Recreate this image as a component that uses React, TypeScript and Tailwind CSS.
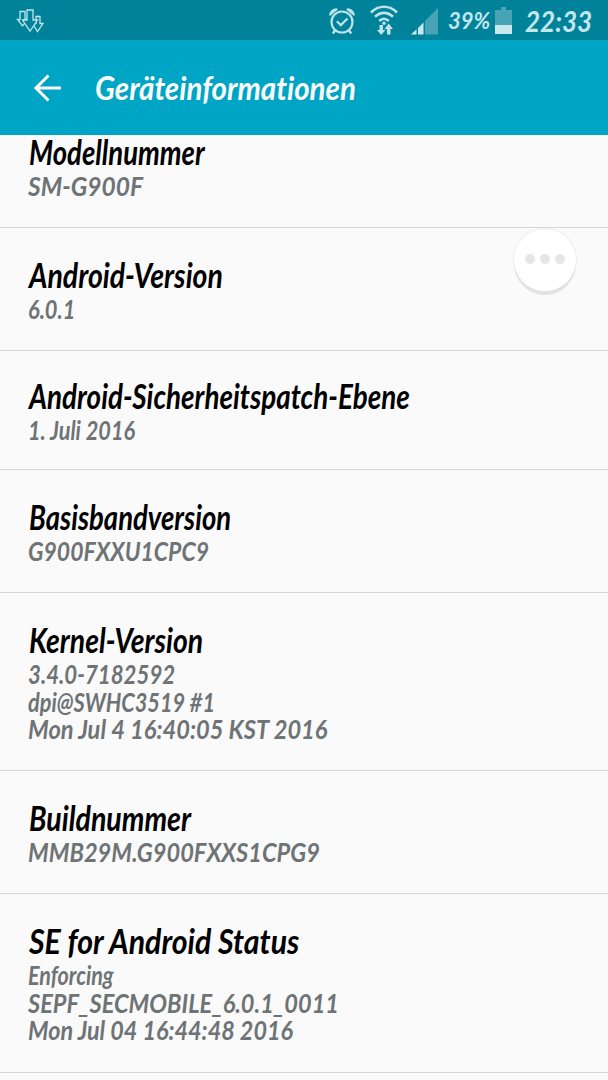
import { useLayoutEffect, useRef, useState } from 'react'
import clsx from 'clsx'

interface Line {
  text: string
  width: number
}

interface Entry {
  title: Line
  values: Line[]
  /** Row height and top padding. */
  box: string
}

const entries: Entry[] = [
  {
    title: { text: 'Modellnummer', width: 176 },
    values: [{ text: 'SM-G900F', width: 115 }],
    box: 'h-[93px] pt-0',
  },
  {
    title: { text: 'Android-Version', width: 194 },
    values: [{ text: '6.0.1', width: 47 }],
    box: 'h-[123px] pt-[30px]',
  },
  {
    title: { text: 'Android-Sicherheitspatch-Ebene', width: 381 },
    values: [{ text: '1. Juli 2016', width: 107 }],
    box: 'h-[119px] pt-[28px]',
  },
  {
    title: { text: 'Basisbandversion', width: 202 },
    values: [{ text: 'G900FXXU1CPC9', width: 181 }],
    box: 'h-[123px] pt-[30px]',
  },
  {
    title: { text: 'Kernel-Version', width: 174 },
    values: [
      { text: '3.4.0-7182592', width: 147 },
      { text: 'dpi@SWHC3519 #1', width: 187 },
      { text: 'Mon Jul 4 16:40:05 KST 2016', width: 299 },
    ],
    box: 'h-[178px] pt-[30px]',
  },
  {
    title: { text: 'Buildnummer', width: 162 },
    values: [{ text: 'MMB29M.G900FXXS1CPG9', width: 292 }],
    box: 'h-[123px] pt-[30px]',
  },
  {
    title: { text: 'SE for Android Status', width: 270 },
    values: [
      { text: 'Enforcing', width: 86 },
      { text: 'SEPF_SECMOBILE_6.0.1_0011', width: 311 },
      { text: 'Mon Jul 04 16:44:48 2016', width: 265 },
    ],
    box: 'h-[179px] pt-[30px]',
  },
]

/** One line of text, condensed or stretched to the given width. */
function FitText({ text, width, className }: Line & { className?: string }) {
  const ref = useRef<HTMLSpanElement>(null)
  const [scale, setScale] = useState(1)

  useLayoutEffect(() => {
    const natural = ref.current?.offsetWidth
    if (natural) setScale(width / natural)
  }, [text, width])

  return (
    <span className={clsx('block', className)} style={{ width }}>
      <span
        ref={ref}
        className="inline-block origin-left align-top whitespace-nowrap"
        style={{ transform: `scaleX(${scale})` }}
      >
        {text}
      </span>
    </span>
  )
}

function DownloadsIcon() {
  return (
    <svg width="28" height="24" viewBox="0 0 28 24" fill="#00829b" stroke="#bfe3ea" strokeWidth="1.3" className="shrink-0">
      <path d="M4 2.500h5v8h3L6.500 17 1.500 10.500H4z" />
      <path d="M20 7.500h4v7h3L21.500 22.500 16.500 14.500H20z" />
      <path d="M11 1h6v10h4.500L14 22 6.500 11H11z" />
    </svg>
  )
}

function AlarmIcon() {
  return (
    <svg width="26" height="28" viewBox="0 0 26 28" fill="none" stroke="#bfe3ea" className="shrink-0">
      <circle cx="13" cy="14" r="10.500" strokeWidth="2.200" />
      <path d="M7.800 13.300l4 3.800 6.700-6.600" strokeWidth="2.200" />
      <path d="M0 7.500C.3 3.500 3.500.3 7.800.3l.9 1.500L1.500 7.500zM26 7.500C25.700 3.500 22.500.3 18.200.3l-.9 1.500 7.200 5.700z" fill="#bfe3ea" stroke="none" />
      <path d="M6 22.500l-2.200 3M20 22.500l2.200 3" strokeWidth="2.400" />
    </svg>
  )
}

function WifiIcon() {
  return (
    <svg width="28" height="31" viewBox="0 0 28 31" fill="none" stroke="#bfe3ea" className="shrink-0">
      <path d="M1 7.500C8.500-.2 19.500-.2 27 7.500M5 11.800c5.500-5.300 12.500-5.300 18 0M9.200 16c3-2.800 6.600-2.800 9.600 0" strokeWidth="2.600" />
      <circle cx="14" cy="18.300" r="1.700" fill="#bfe3ea" stroke="none" />
      <path d="M9.500 20h3.500v5h2.500L11.200 30 7 25h2.500zM17 29.500V24h-2.500l4.200-5.500L23 24h-2.500v5.500z" fill="#bfe3ea" stroke="none" />
    </svg>
  )
}

function SignalIcon() {
  return (
    <svg width="27" height="27" viewBox="0 0 27 27" className="shrink-0">
      <path d="M0 26.500l5.500-5.200v5.200zM7 20l5.500-5.500v12H7z" fill="#c9e8ee" />
      <path d="M14 13L27 0v26.500H14z" fill="#47a3b5" />
    </svg>
  )
}

function BatteryIcon() {
  return (
    <svg width="17" height="27" viewBox="0 0 17 27" className="shrink-0">
      <path d="M6 0h5v3h6v15H0V3h6z" fill="#47a3b5" />
      <path d="M0 18h17v9H0z" fill="#c9e8ee" />
    </svg>
  )
}

function StatusBar() {
  return (
    <div className="flex h-10 items-start bg-[#00829b] pl-4 text-[#c5e6ec]">
      <div className="pt-[9px]">
        <DownloadsIcon />
      </div>
      <div className="ml-[285px] pt-2">
        <AlarmIcon />
      </div>
      <div className="ml-[15px] pt-[5px]">
        <WifiIcon />
      </div>
      <div className="ml-[13px] pt-2">
        <SignalIcon />
      </div>
      <FitText text="39%" width={42} className="ml-[10px] pt-[7px] text-[22px] leading-[27px]" />
      <div className="ml-[5px] pt-[7px]">
        <BatteryIcon />
      </div>
      <FitText text="22:33" width={67} className="ml-[13px] pt-[5px] text-[28px] leading-8" />
    </div>
  )
}

function AppBar() {
  return (
    <header className="flex h-[95px] items-center bg-[#00a5c6] pl-[33px]">
      <svg width="29" height="28" viewBox="0 0 29 28" fill="none" stroke="#fafafa" strokeWidth="3" className="shrink-0">
        <path d="M28 14H3M15.500 1.500L3 14l12.500 12.500" />
      </svg>
      <FitText text="Geräteinformationen" width={261} className="mb-0.5 ml-[33px] text-[33px] leading-[34px] text-[#fafafa]" />
    </header>
  )
}

function EntryRow({ title, values, box }: Entry) {
  return (
    <li className={clsx('shrink-0 border-b border-[#d6d6d6] pl-7', box)}>
      <FitText {...title} className="ml-px text-[34px] leading-[34px] text-black" />
      <div className="mt-1">
        {values.map((value) => (
          <FitText key={value.text} {...value} className="text-[26px] leading-[27.700px] text-[#6e7375]" />
        ))}
      </div>
    </li>
  )
}

/** Round floating button that hovers over the list. */
function AssistantButton() {
  return (
    <button
      type="button"
      aria-label="Menü"
      className="absolute top-[229px] left-[514px] flex size-[62px] items-center justify-center gap-[5px] rounded-full bg-white pb-0.5 shadow-[0_4px_0_#e3e3e3,0_0_1px_1px_#ececec]"
    >
      <span className="size-[10px] rounded-full bg-[#e6e6e6]" />
      <span className="size-[10px] rounded-full bg-[#e6e6e6]" />
      <span className="size-[10px] rounded-full bg-[#e6e6e6]" />
    </button>
  )
}

export default function App() {
  return (
    <div className="relative flex h-[1080px] w-[608px] flex-col overflow-hidden bg-[#fafafa] font-['Lato','Open_Sans',sans-serif] font-bold italic [font-variant-ligatures:none]">
      <StatusBar />
      <AppBar />
      <ul className="flex flex-col">
        {entries.map((entry) => (
          <EntryRow key={entry.title.text} {...entry} />
        ))}
      </ul>
      <AssistantButton />
    </div>
  )
}
